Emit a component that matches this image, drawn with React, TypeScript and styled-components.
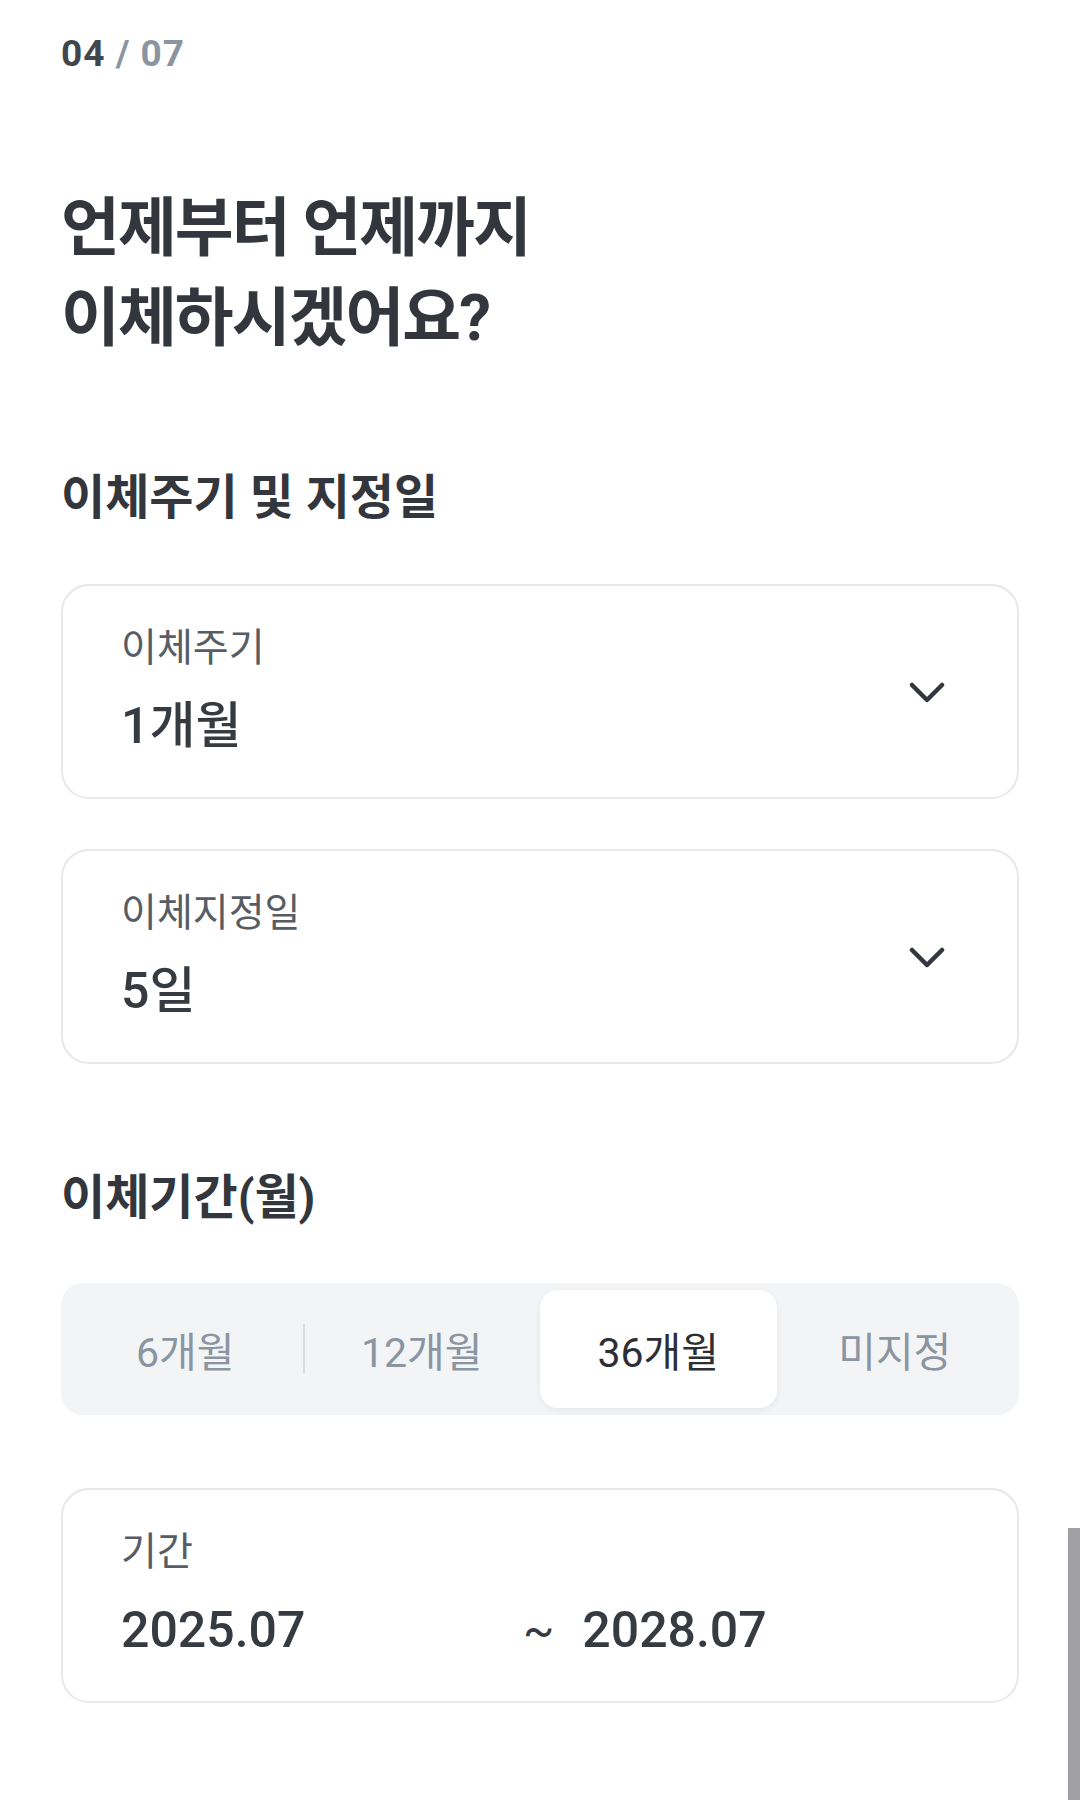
import styled, { createGlobalStyle } from "styled-components";

// Base page reset, the screenshot is a plain white mobile page
const GlobalStyle = createGlobalStyle`
  html, body {
    margin: 0;
    padding: 0;
    background: #ffffff;
  }
  body {
    font-family: Roboto, "Noto Sans CJK KR", sans-serif;
    color: #333940;
  }
`;

// Top level container, holds all sections in one column
const Page = styled.div`
  padding: 34px 61px 100px 61px;
  display: flex;
  flex-direction: column;
`;

// Step counter "04 / 07"
const Counter = styled.div`
  font-size: 37px;
  line-height: 40px;
  font-weight: 700;
  color: #40464d;
  letter-spacing: 1px;
`;

const CounterTotal = styled.span`
  color: #8b95a1;
`;

const Title = styled.h1`
  margin: 110px 0 0 0;
  font-size: 64px;
  line-height: 90px;
  font-weight: 700;
  letter-spacing: -2px;
  color: #33373d;
`;

// Section headings, margin is passed from the parent since it differs
const SectionTitle = styled.h2<{ $top: number }>`
  margin: ${(p) => p.$top}px 0 0 0;
  font-size: 48px;
  line-height: 60px;
  font-weight: 700;
  letter-spacing: 0;
  color: #33373d;
`;

// Bordered select box / info box
const Field = styled.div<{ $top: number }>`
  margin-top: ${(p) => p.$top}px;
  height: 215px;
  box-sizing: border-box;
  border: 2px solid #e6e8eb;
  border-radius: 28px;
  padding: 40px 72px 0 58px;
  display: flex;
  justify-content: space-between;
  align-items: flex-start;
`;

const FieldBody = styled.div`
  display: flex;
  flex-direction: column;
  gap: 26px;
`;

const Label = styled.div`
  font-size: 39px;
  line-height: 44px;
  font-weight: 400;
  color: #575d64;
`;

const Value = styled.div`
  font-size: 50px;
  line-height: 60px;
  font-weight: 500;
  color: #363b41;
`;

const Chevron = styled.svg`
  width: 36px;
  height: 22px;
  margin-top: 56px;
  flex-shrink: 0;
`;

const PeriodRow = styled.div`
  display: flex;
  align-items: center;
`;

const PeriodStart = styled(Value)`
  width: 402px;
`;

const Tilde = styled.span`
  font-size: 46px;
  line-height: 60px;
  color: #363b41;
  margin-right: 28px;
`;

// Segmented control for the transfer period
const Segments = styled.div`
  margin-top: 55px;
  background: #f2f4f6;
  border-radius: 22px;
  padding: 7px 6px;
  display: grid;
  grid-template-columns: repeat(4, 1fr);
`;

const Segment = styled.div<{ $active?: boolean; $divider?: boolean }>`
  position: relative;
  height: 118px;
  display: flex;
  align-items: center;
  justify-content: center;
  font-size: 41px;
  font-weight: 400;
  border-radius: 18px;
  color: ${(p) => (p.$active ? "#2b2f34" : "#8b95a1")};
  background: ${(p) => (p.$active ? "#ffffff" : "transparent")};
  box-shadow: ${(p) => (p.$active ? "0 2px 6px rgba(0, 0, 0, 0.06)" : "none")};

  &::before {
    content: "";
    display: ${(p) => (p.$divider ? "block" : "none")};
    position: absolute;
    left: -1px;
    top: 34px;
    width: 2px;
    height: 49px;
    background: #d9dde1;
  }
`;

// Overlay scrollbar drawn by the browser in the original shot
const ScrollThumb = styled.div`
  position: absolute;
  right: 0;
  top: 1528px;
  width: 12px;
  height: 272px;
  background: #a1a1a5;
`;

const ChevronIcon = () => (
  <Chevron viewBox="0 0 36 22">
    <polyline
      points="3,3 18,18 33,3"
      fill="none"
      stroke="#33373d"
      strokeWidth="4.5"
      strokeLinecap="round"
      strokeLinejoin="round"
    />
  </Chevron>
);

const periods = ["6개월", "12개월", "36개월", "미지정"];
const activePeriod = 2;

const App = () => {
  return (
    <>
      <GlobalStyle />
      <Page>
        <Counter>
          04 <CounterTotal>/ 07</CounterTotal>
        </Counter>

        <Title>
          언제부터 언제까지
          <br />
          이체하시겠어요?
        </Title>

        <SectionTitle $top={104}>이체주기 및 지정일</SectionTitle>

        <Field $top={56}>
          <FieldBody>
            <Label>이체주기</Label>
            <Value>1개월</Value>
          </FieldBody>
          <ChevronIcon />
        </Field>

        <Field $top={50}>
          <FieldBody>
            <Label>이체지정일</Label>
            <Value>5일</Value>
          </FieldBody>
          <ChevronIcon />
        </Field>

        <SectionTitle $top={104}>이체기간(월)</SectionTitle>

        <Segments>
          {periods.map((p, i) => (
            <Segment
              key={p}
              $active={i === activePeriod}
              $divider={i === 1}
            >
              {p}
            </Segment>
          ))}
        </Segments>

        <Field $top={73}>
          <FieldBody>
            <Label>기간</Label>
            <PeriodRow>
              <PeriodStart>2025.07</PeriodStart>
              <Tilde>~</Tilde>
              <Value>2028.07</Value>
            </PeriodRow>
          </FieldBody>
        </Field>
      </Page>
      <ScrollThumb />
    </>
  );
};

export default App;
